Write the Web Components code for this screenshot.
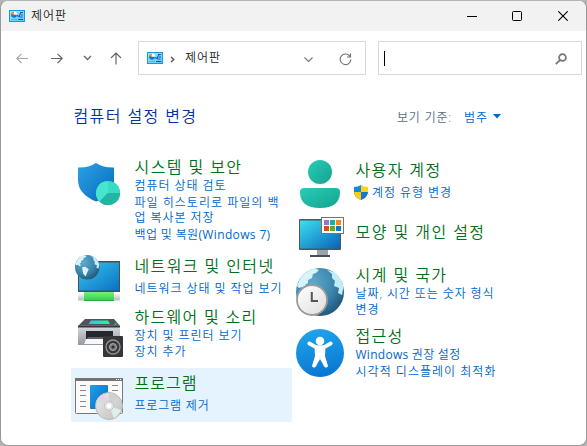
<!DOCTYPE html>
<html lang="ko">
<head>
<meta charset="utf-8">
<title>제어판</title>
<style>
html,body{margin:0;height:100%;overflow:hidden;background:#b4b4b4}
body{font-family:"Open Sans","Noto Sans CJK KR",sans-serif;font-weight:350;font-size:12px;color:#1a1a1a}
</style>
</head>
<body>
<cp-window></cp-window>
<script>
const define=(name,html,setup)=>customElements.define(name,class extends HTMLElement{
  connectedCallback(){
    if(this.shadowRoot)return;
    this.attachShadow({mode:'open'}).innerHTML=html;
    if(setup)setup(this,this.shadowRoot);
  }
});

/* Line of text tracked out to a given advance width; Latin runs use the regular weight. */
define('cp-text','<style>:host{display:inline-block;white-space:nowrap}span{display:inline-block}b{font-weight:400}</style><span></span>',(el,root)=>{
  const s=root.querySelector('span');
  s.innerHTML=(el.getAttribute('label')||'').replace(/[A-Za-z0-9()]+/g,'<b>$&</b>');
  const w=+el.getAttribute('w');
  if(w)s.style.letterSpacing=((w-s.getBoundingClientRect().width)/s.textContent.length)+'px';
});

const globe=`<circle cx="24" cy="24" r="24" fill="url(#gl)"/>
<path d="M3 13C6 7 12 2 19 .6L23 2 20 5 17 6 16 10 12 12 12 15 9 17 12 20 9 22 6 19 3 20 1 18Z" fill="#d8f4fb"/>
<path d="M31 2L38 4Q46 10 47.500 19L46 27 42 25 43 20 38 18 39 13 36 10 36 6Z" fill="#c5ebf5"/>
<path d="M14 24L20 23 27 28 24 34 21 42 16 37 15 31Z" fill="#d8f4fb"/>`;
const globeGrad='<radialGradient id="gl" cx=".35" cy=".3" r=".8"><stop stop-color="#5fa9cb"/><stop offset=".55" stop-color="#3c86ae"/><stop offset="1" stop-color="#1b4f72"/></radialGradient>';
const lin=(id,a,b,c='x1="0" y1="0" x2="1" y2="1"')=>`<linearGradient id="${id}" ${c}><stop stop-color="${a}"/><stop offset="1" stop-color="${b}"/></linearGradient>`;
const icons={
shield:`<defs>${lin('a','#2ba2e4','#0669bd')}</defs>
<path d="M21 3Q29 8 39 7.5V21Q39 34 25 40L21 41.500Q3 34 3 20V7.500Q13 8 21 3Z" fill="url(#a)"/>
<circle cx="33" cy="33" r="12" fill="#28b9a3"/><path d="M33 33V21A12 12 0 0 0 24.500 41.500Z" fill="#45e5cf"/><path d="M33 33V21A12 12 0 0 1 45 33Z" fill="#38dcc4"/><path d="M33 33H45A12 12 0 0 1 24.500 41.500Z" fill="#20b6a2"/>`,
network:`<defs>${globeGrad}${lin('a','#37c6ec','#0b70c4')}${lin('p','#fff','#b9b9b9','x1="0" y1="0" x2="0" y2="1"')}${lin('g','#35c94f','#77f17b','x1="0" y1="1" x2="0" y2="0"')}</defs>
<path d="M3 6H45V37H3Z" fill="#46505a"/><path d="M4 7.500H44V35.500H4Z" fill="url(#a)"/>
<rect x="3" y="38" width="42" height="7.500" rx="1" fill="url(#p)"/><rect x="9" y="37" width="30" height="9" rx="1" fill="url(#g)"/><path d="M9 45.500H39" stroke="#24ad3c"/>
<g transform="scale(.51)">${globe}</g>`,
hardware:`<defs>${lin('p','#dadde1','#9298a0','x1="0" y1="0" x2="0" y2="1"')}${lin('s','#27c9df','#35ef9b','x1="0" y1="0" x2="1" y2="0"')}</defs>
<path d="M10 6H39L45 13H3Z" fill="#50545a"/><path d="M16 7.500H33L35 11H13.500Z" fill="url(#s)"/><path d="M3 12.500H45V32H3Z" fill="url(#p)"/><path d="M3 12.500H45V14.500H3Z" fill="#34383d"/><circle cx="40.500" cy="11" r="1" fill="#12e34b"/>
<path d="M11 18H38V28H11Z" fill="#24272b"/><path d="M13 24H35V28L37 30H9Z" fill="#5b6067"/><path d="M11 26H35V31H9Z" fill="#f6f7f8"/>
<rect x="28" y="23" width="20" height="21" rx="1" fill="#363638"/><circle cx="38" cy="34" r="7" fill="#39393b" stroke="#949496" stroke-width="1.300"/><circle cx="38" cy="34" r="3.500" fill="#77777a" stroke="#aaa"/><circle cx="38" cy="34" r="1.500" fill="#333"/>`,
programs:`<defs>${lin('a','#1da0e8','#0967c0')}${lin('d','#eee','#bdbdbd')}</defs>
<rect x=".5" y="5.500" width="47" height="35" rx="1" fill="#fafafa" stroke="#777"/><path d="M0 5H48V8H0Z" fill="#77736f"/><path d="M41 6.500h1m1 0h1m1 0h1" stroke="#fff"/>
<path d="M5 12.500h6M5 17.500h6M5 22.500h6M5 28.500h6M5 33.500h6M37 12.500h6M37 17.500h6" stroke="#888"/><rect x="15" y="12" width="18" height="24" rx="1" fill="url(#a)"/>
<circle cx="34" cy="33" r="13.500" fill="url(#d)" stroke="#b8b8b8"/><path d="M34 33L21 29Q23 23 29 21Z" fill="#e8cfe5"/><path d="M34 33L21.500 29 23 26Z" fill="#c8e8cf"/><path d="M34 33L34 20Q40 20 43 24Z" fill="#d1d1d1"/><path d="M34 33L46 37Q43 43 39 45Z" fill="#dff0ea"/><circle cx="34" cy="33" r="4.500" fill="#e7e7e7" stroke="#c4c4c4"/><circle cx="34" cy="33" r="2.300" fill="#fff"/>`,
user:`<defs>${lin('a','#28cdb6','#13a28f')}</defs><circle cx="24" cy="12" r="12" fill="url(#a)"/><path d="M8 28H40Q44 28 44 32Q44 48 24 48Q4 48 4 32Q4 28 8 28Z" fill="url(#a)"/>`,
display:`<defs>${lin('a','#3ddff0','#0962b5')}</defs><path d="M21 36H32V42H21Z" fill="#98a4ae"/><path d="M14 42H34V44H14Z" fill="#46505b"/><rect x="3" y="6" width="42" height="31" rx="1" fill="#4b5761"/><path d="M4 7.500H44V35.500H4Z" fill="url(#a)"/>
<rect x="25.500" y="4.500" width="22" height="16" fill="#fff" stroke="#77736f"/><path d="M28 7h5v5h-5z" fill="#9a72d4"/><path d="M34 7h5v5h-5z" fill="#15b3a0"/><path d="M40 7h5v5h-5z" fill="#f58c08"/><path d="M28 13h5v5h-5z" fill="#dc4b13"/><path d="M34 13h5v5h-5z" fill="#5db315"/><path d="M40 13h5v5h-5z" fill="#0879d7"/>`,
clock:`<defs>${globeGrad}${lin('c','#fff','#dedede')}</defs>${globe}<circle cx="16" cy="32" r="15" fill="url(#c)" stroke="#9b9b9b" stroke-width="1.800"/><path d="M15.800 24V33H22" fill="none" stroke="#555" stroke-width="2"/>`,
access:`<defs>${lin('a','#20a3ea','#0876d2','x1=".4" y1="0" x2=".6" y2="1"')}</defs><circle cx="24" cy="24" r="24" fill="url(#a)"/><circle cx="24" cy="12" r="4.300" fill="#fff"/><path d="M13.300 14.500L20 18.200H28L34.700 14.500" fill="none" stroke="#fff" stroke-width="3.800" stroke-linecap="round" stroke-linejoin="round"/><path d="M18.500 17H29.500L29 27L32 37Q31 39.500 28.500 38L24 30L19.500 38Q17 39.500 16 37L19 27Z" fill="#fff"/>`
};
const cp=`<svg viewBox="0 0 16 12" width="16" height="12"><defs>${lin('z','#9be6fb','#5fc9f5')}</defs><rect x=".5" y=".5" width="15" height="11" fill="url(#z)" stroke="#1797dd"/><circle cx="5" cy="4.800" r="2.900" fill="#1676d0"/><path d="M5 4.800V1.500A3.200 3.200 0 0 1 8.200 4.800Z" fill="#fff"/><path d="M5 5V2A3 3 0 0 0 2.200 4Z" fill="#ff9d20"/><path d="M8 5.500L10 6.500 12 2.500M11 2.500h3M12 5h2M10.500 7h3" fill="none" stroke="#175fae" stroke-width="1.100"/><path d="M2 9.500H8" stroke="#f68a10" stroke-width="1.200"/><path d="M9 9.500H14" stroke="#0a58b0" stroke-width="1.200"/></svg>`;

define('cp-icon','<style>:host{display:block;flex:none;width:48px;height:48px}svg{display:block}</style><svg viewBox="0 0 48 48" width="48" height="48"></svg>',(el,root)=>{root.querySelector('svg').innerHTML=icons[el.getAttribute('name')]||''});

/* Glyph sitting in a fixed slot of the toolbar or title bar. */
define('cp-glyph','<style>:host{display:flex;align-items:center;justify-content:center;flex:none}svg{display:block}</style>',(el,root)=>{
  const g={
  back:[12,11,'M12 5.500H1M5.500 .8L.8 5.500L5.500 10.200','#a6a6a6',1.1],forward:[12,11,'M0 5.500H11M6.500 .8L11.200 5.500L6.500 10.200','#666',1.2],
  recent:[9,6,'M1 1L4.500 4.500L8 1','#666',1.3],up:[12,13,'M6 12.500V1M1 6L6 1L11 6','#666',1.2],
  sep:[5,7,'M1 1L3.800 3.500L1 6','#555',1.4],down:[9,6,'M.5 .5L4.500 4.500L8.500 .5','#777',1.1],
  refresh:[13,13,'M10.800 3.200A5.300 5.300 0 1 0 11.800 6.500M11.500 .5V4H8','#777',1.2],
  search:[12,12,'M5.200 6.800L.8 11.200','#777',1.9],min:[10,10,'M0 5.500H10','#000',1],
  max:[10,10,'M1.500 .5H8.500Q9.500 .5 9.500 1.500V8.500Q9.500 9.500 8.500 9.500H1.500Q.5 9.500 .5 8.500V1.500Q.5 .5 1.500 .5Z','#000',1],
  close:[10,10,'M.3 .3L9.700 9.700M9.700 .3L.3 9.700','#000',1.1]};
  const n=el.getAttribute('name'),[a,b,d,c,w]=g[n];
  root.innerHTML+=`<svg width="${a}" height="${b}" viewBox="0 0 ${a} ${b}"><path d="${d}" fill="none" stroke="${c}" stroke-width="${w}"/>${n==='search'?'<circle cx="7.500" cy="4.500" r="3.400" fill="none" stroke="#777" stroke-width="1.800"/>':''}</svg>`;
});

define('cp-titlebar',`<style>
:host{display:flex;height:30px;background:#f2f2f2;align-items:center;padding:0 0 0 8px;box-sizing:border-box}
cp-text{margin-left:6px;margin-right:auto;line-height:28px;margin-top:-1px}svg{display:block}
cp-glyph{width:45px;height:28px}</style>${cp}<cp-text label="제어판" w="36"></cp-text><cp-glyph name="min"></cp-glyph><cp-glyph name="max"></cp-glyph><cp-glyph name="close" style="width:47px"></cp-glyph>`);

define('cp-toolbar',`<style>
:host{display:flex;height:54px;padding:0 4px 0 15px;align-items:center;box-sizing:border-box}
.box{display:flex;align-items:center;flex:none;height:34px;box-sizing:border-box;border:1px solid #d9d9d9}
.address{width:228px;margin-left:16px;padding-left:8px}
.address cp-text{margin:-2px auto 0 10px}
.search{width:204px;margin-left:12px;padding:0 14px 0 5px;justify-content:space-between}
i{width:1px;height:15px;background:#000}svg{display:block}</style>
<cp-glyph name="back" style="width:12px;padding-top:1px"></cp-glyph><cp-glyph name="forward" style="width:12px;margin-left:23px;padding-top:1px"></cp-glyph><cp-glyph name="recent" style="width:9px;margin-left:20px"></cp-glyph><cp-glyph name="up" style="width:12px;margin-left:18px;padding-top:1px"></cp-glyph>
<div class="box address">${cp}<cp-glyph name="sep" style="width:5px;margin-left:7px;padding-top:2px"></cp-glyph><cp-text label="제어판" w="36"></cp-text><cp-glyph name="down" style="margin-right:26px;padding-top:3px"></cp-glyph><cp-glyph name="refresh" style="margin-right:13px;padding-top:2px"></cp-glyph></div>
<div class="box search"><i></i><cp-glyph name="search" style="padding-top:2px"></cp-glyph></div>`);

define('cp-heading',`<style>
:host{display:flex;height:68px;padding:0 85px 0 72.500px;align-items:center;justify-content:space-between;box-sizing:border-box}
.h{font-size:16px;color:#003399;margin-top:-8px}.by{display:flex;align-items:center;color:#5a6a80;margin-top:-5px}.v{color:#0066cc;margin:0 5px 0 12px}svg{display:block}
</style><cp-text class="h" label="컴퓨터 설정 변경" w="124"></cp-text><div class="by"><cp-text label="보기 기준:" w="55"></cp-text><cp-text class="v" label="범주" w="24"></cp-text><svg width="8" height="5"><path d="M0 0H8L4 4.500Z" fill="#0066cc"/></svg></div>`);

define('cp-link',`<style>:host{display:flex;height:15px;line-height:15px;align-items:center;color:#0066cc;margin-top:var(--gap,0)}</style><slot></slot>`,(el,root)=>{
  const t=document.createElement('cp-text');t.setAttribute('label',el.getAttribute('label'));t.setAttribute('w',el.getAttribute('w'));root.append(t);
});

define('cp-category',`<style>
:host{display:flex;box-sizing:border-box;height:var(--h);padding-left:4px;gap:11.500px;border-radius:2px}
:host([active]){background:#e5f3ff}
cp-icon{margin-top:var(--icon)}
.body{display:block;padding-top:var(--top)}
.title{height:20px;line-height:20px;font-size:16px;color:#00701a}
</style><div class="body"><div class="title"></div><slot></slot></div>`,(el,root)=>{
  const i=document.createElement('cp-icon');i.setAttribute('name',el.getAttribute('icon'));root.querySelector('.body').before(i);
  root.querySelector('.title').innerHTML=`<cp-text label="${el.getAttribute('label')}" w="${el.getAttribute('w')}"></cp-text>`;
});

const link=(label,w,gap=0,pre='',x=0)=>`<cp-link label="${label}" w="${w}" style="--gap:${gap}px;margin-left:${x}px">${pre}</cp-link>`;
const cat=(icon,label,w,h,it,top,body='',extra='')=>`<cp-category ${extra} icon="${icon}" label="${label}" w="${w}" style="--h:${h}px;--icon:${it}px;--top:${top}px">${body}</cp-category>`;
const uac='<svg width="14" height="15" viewBox="0 0 14 15" style="margin-right:4px"><path d="M7 0Q10 2 14 2V7Q14 12 7 15Z" fill="#ffd21a"/><path d="M7 0Q4 2 0 2V7Q0 12 7 15Z" fill="#1589df"/><path d="M7 7H0Q0 12 7 15Z" fill="#ffca12"/><path d="M7 7H14Q14 12 7 15Z" fill="#1179cd"/></svg>';

define('cp-categories',`<style>:host{display:grid;grid-template-columns:221px 213px;padding-left:70px}</style>
<div>${cat('shield','시스템 및 보안',108,99,7,4,link('컴퓨터 상태 검토',92,1)+link('파일 히스토리로 파일의 백',145,1.5)+link('업 복사본 저장',80,.5)+link('백업 및 복원(Windows 7)',136,2))}
${cat('network','네트워크 및 인터넷',140,51,3,4,link('네트워크 상태 및 작업 보기',148,5))}
${cat('hardware','하드웨어 및 소리',123,65,10,4,link('장치 및 프린터 보기',108,1)+link('장치 추가',52,1))}
${cat('programs','프로그램',63,54,5,5,link('프로그램 제거',75,5),'active')}</div>
<div>${cat('user','사용자 계정',86,58,7,7,link('계정 유형 변경',80,5,uac,-1.5))}
${cat('display','모양 및 개인 설정',130,53,2,11)}
${cat('clock','시계 및 국가',92,61,4,1,link('날짜, 시간 또는 숫자 형식',139,1)+link('변경',24,.5))}
${cat('access','접근성',48,60,4,1,link('Windows 권장 설정',105,1)+link('시각적 디스플레이 최적화',141,2))}</div>`);

define('cp-window',`<style>:host{display:block;width:587px;height:446px;box-sizing:border-box;border:1px solid #999;border-top-color:#b4b4b4;border-radius:8px;overflow:hidden;background:#fff}</style>
<cp-titlebar></cp-titlebar><cp-toolbar></cp-toolbar><cp-heading></cp-heading><cp-categories></cp-categories>`);
</script>
</body>
</html>
